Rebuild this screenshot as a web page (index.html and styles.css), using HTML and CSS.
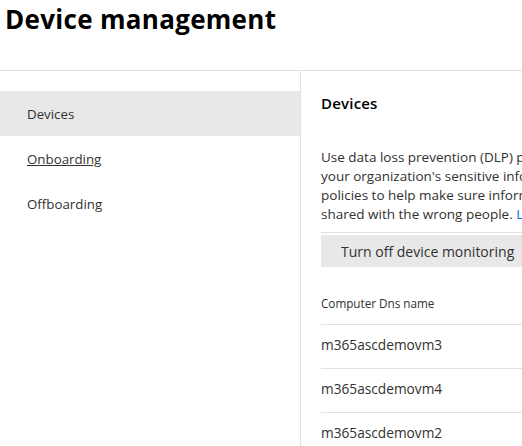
FILE: index.html
```html
<!DOCTYPE html>
<html>
<head>
<meta charset="utf-8">
<link rel="stylesheet" href="styles.css">
</head>
<body>
<header class="page-header">
  <h1 class="page-title">Device management</h1>
</header>
<div class="layout">
  <nav class="side-nav">
    <div class="nav-item active">Devices</div>
    <div class="nav-item"><span class="nav-link">Onboarding</span></div>
    <div class="nav-item">Offboarding</div>
  </nav>
  <main class="pane">
    <h2 class="pane-title">Devices</h2>
    <p class="pane-desc">
      <span class="line">Use data loss prevention (DLP) policies to help identify and protect</span>
      <span class="line">your organization's sensitive info. For example, you can set up</span>
      <span class="line">policies to help make sure information in email and docs isn't</span>
      <span class="line">shared with the wrong people. <a class="link">Learn more</a></span>
    </p>
    <div class="toolbar">
      <button class="btn">Turn off device monitoring</button>
    </div>
    <div class="table">
      <div class="th">Computer Dns name</div>
      <div class="td">m365ascdemovm3</div>
      <div class="td">m365ascdemovm4</div>
      <div class="td">m365ascdemovm2</div>
    </div>
  </main>
</div>
</body>
</html>
```

FILE: styles.css
```css
* { box-sizing: border-box; }
html, body { margin: 0; padding: 0; }
body {
  font-family: "Open Sans", "Noto Sans", sans-serif;
  color: #323130;
  background: #fff;
  width: 522px;
  height: 446px;
  overflow: hidden;
}
.page-header {
  height: 71px;
  border-bottom: 1px solid #e1e1e1;
  padding: 0 0 0 5px;
}
.page-title {
  margin: 0;
  font-size: 26px;
  font-weight: 700;
  letter-spacing: 0.3px;
  line-height: 38px;
  color: #000;
}
.layout {
  display: flex;
  height: 375px;
}
.side-nav {
  width: 301px;
  flex: none;
  border-right: 1px solid #e1e1e1;
  padding-top: 20px;
}
.nav-item {
  height: 45px;
  display: flex;
  align-items: center;
  padding-left: 27px;
  font-size: 13.3px;
  color: #323130;
}
.nav-item.active {
  background: #e8e8e8;
}
.nav-link {
  text-decoration: underline;
}
.pane {
  flex: 1;
  min-width: 0;
  overflow: hidden;
  padding-left: 20px;
  white-space: nowrap;
}
.pane-title {
  margin: 22px 0 0;
  font-size: 15px;
  font-weight: 600;
  letter-spacing: 0.2px;
  line-height: 20px;
  color: #000;
}
.pane-desc {
  margin: 35px 0 0;
  font-size: 13.5px;
  line-height: 19px;
  color: #323130;
}
.line { display: block; }
.link { color: #0078d4; }
.toolbar {
  margin-top: 8px;
  border-top: 1px solid #e1e1e1;
  padding-top: 2px;
  width: 400px;
}
.btn {
  height: 32px;
  border: none;
  background: #e8e8e8;
  font-family: inherit;
  font-size: 14px;
  color: #323130;
  padding: 0 20px;
  width: 320px;
  text-align: left;
}
.table { margin-top: 14px; width: 400px; }
.th {
  height: 44px;
  display: flex;
  align-items: center;
  font-size: 11.7px;
  color: #323130;
  border-bottom: 1px solid #e1e1e1;
}
.td {
  height: 44px;
  display: flex;
  align-items: center;
  padding-bottom: 4px;
  font-size: 13.7px;
  color: #323130;
  border-bottom: 1px solid #e1e1e1;
}
```
